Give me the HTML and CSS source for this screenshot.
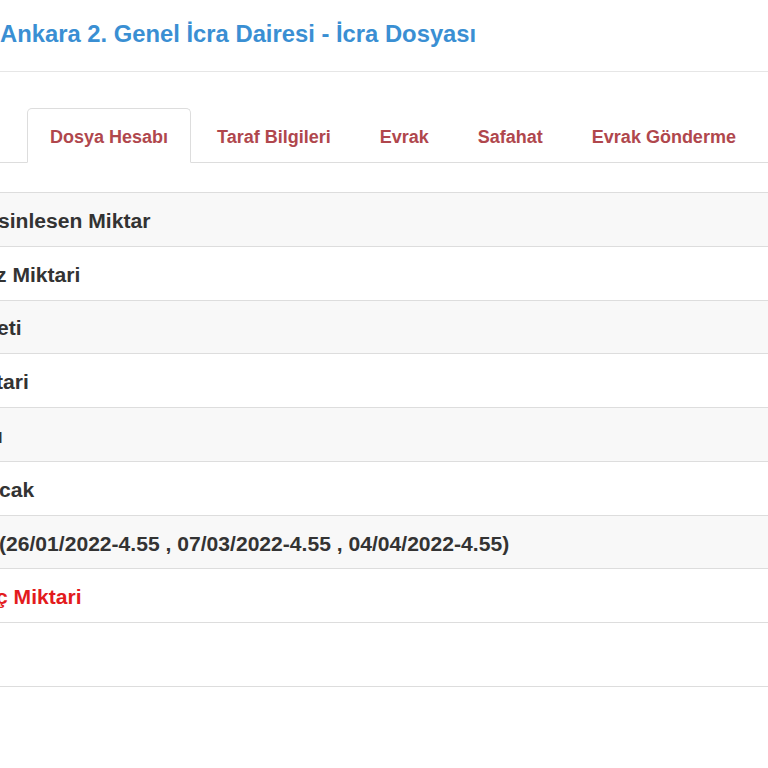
FILE: index.html
```html
<!DOCTYPE html>
<html lang="tr">
<head>
<meta charset="utf-8">
<title>İcra Dosyası</title>
<link rel="stylesheet" href="styles.css">
</head>
<body>
<div class="page">
  <header class="page-header">
    <h1 class="title">Ankara 2. Genel İcra Dairesi - İcra Dosyası</h1>
  </header>
  <ul class="nav-tabs">
    <li class="tab active"><a>Dosya Hesabı</a></li>
    <li class="tab"><a>Taraf Bilgileri</a></li>
    <li class="tab"><a>Evrak</a></li>
    <li class="tab"><a>Safahat</a></li>
    <li class="tab"><a>Evrak Gönderme</a></li>
  </ul>
  <table class="acct">
    <tbody>
      <tr class="striped"><td><span class="lbl off-2">sinlesen Miktar</span></td></tr>
      <tr><td><span class="lbl off-4">z Miktari</span></td></tr>
      <tr class="striped"><td><span class="lbl off-3">eti</span></td></tr>
      <tr><td><span class="lbl off-4">tari</span></td></tr>
      <tr class="striped"><td><span class="lbl off-3">ı</span></td></tr>
      <tr><td><span class="lbl off-1">cak</span></td></tr>
      <tr class="striped"><td><span class="lbl off-1">(26/01/2022-4.55 , 07/03/2022-4.55 , 04/04/2022-4.55)</span></td></tr>
      <tr><td><span class="lbl off-4 danger">ç Miktari</span></td></tr>
      <tr class="empty"><td></td></tr>
    </tbody>
  </table>
</div>
</body>
</html>
```
FILE: styles.css
```css
* { box-sizing: border-box; }
html, body {
  margin: 0;
  padding: 0;
  background: #fff;
  overflow: hidden;
}
body {
  font-family: "Liberation Sans", Arial, Helvetica, sans-serif;
  color: #333;
  width: 768px;
}
.page {
  display: flex;
  flex-direction: column;
}
.page-header {
  height: 72px;
  padding-top: 20px;
  border-bottom: 1px solid #e6e6e6;
}
.title {
  margin: 0;
  font-size: 23.8px;
  line-height: 28px;
  font-weight: bold;
  color: #3a8fd3;
  white-space: nowrap;
}
.nav-tabs {
  list-style: none;
  margin: 36px 0 0 0;
  padding: 0 0 0 27px;
  display: flex;
  border-bottom: 1px solid #dddddd;
  height: 55px;
}
.tab {
  margin: 0 3px -1px 0;
  display: flex;
}
.tab a {
  display: flex;
  align-items: center;
  height: 55px;
  padding: 4px 22px 0;
  border: 1px solid transparent;
  border-radius: 5px 5px 0 0;
  font-size: 18px;
  font-weight: bold;
  color: #b0474d;
  white-space: nowrap;
}
.tab.active a {
  background: #fff;
  border-color: #dddddd;
  border-bottom-color: #fff;
}
.acct {
  margin-top: 29px;
  width: 100%;
  border-collapse: collapse;
}
.acct td {
  border-top: 1px solid #dddddd;
  padding: 12.9px 0 9.9px;
  line-height: 30px;
  font-size: 21.1px;
  font-weight: bold;
  color: #333;
  white-space: nowrap;
  overflow: hidden;
}
.acct tr.striped td { background: #f8f8f8; }
.acct tr.empty td {
  height: 64px;
  border-bottom: 1px solid #dddddd;
}
.lbl { display: inline-block; }
.off-1 { margin-left: -1px; }
.off-2 { margin-left: -2px; }
.off-3 { margin-left: -3px; }
.off-4 { margin-left: -4px; }
.danger { color: #e31b1d; }
```
